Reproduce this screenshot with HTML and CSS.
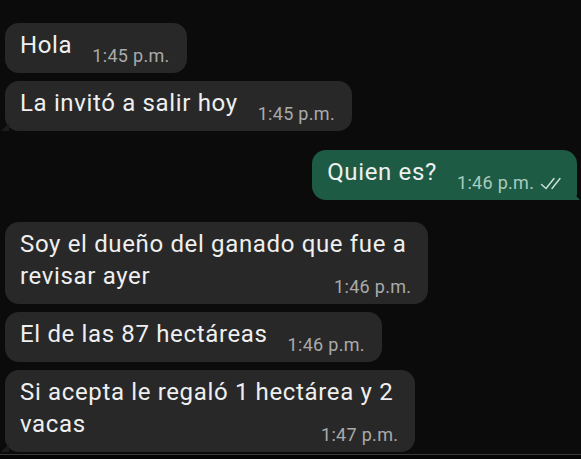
FILE: index.html
```html
<!DOCTYPE html>
<html lang="es">
<head>
  <meta charset="UTF-8" />
  <title>Chat</title>
  <meta name="viewport" content="width=device-width, initial-scale=1.0" />
  <link rel="stylesheet" href="styles.css">
</head>
<body>
  <div class="chat">
    <div class="msg in">
      <span class="text">Hola</span><span class="time">1:45 p.m.</span>
    </div>
    <div class="msg in tail">
      <span class="text">La invitó a salir hoy</span><span class="time">1:45 p.m.</span>
    </div>

    <div class="msg out tail">
      <span class="text">Quien es?</span><span class="time">1:46 p.m.
        <svg class="ticks" viewBox="0 0 26 14" width="26" height="14">
          <path d="M1.5 7.5 L6 11.5 L14 1.5" />
          <path d="M12 11.5 L20 1.5" />
        </svg>
      </span>
    </div>

    <div class="msg in">
      <span class="text">Soy el dueño del ganado que fue a<br>revisar ayer</span><span class="time">1:46 p.m.</span>
    </div>
    <div class="msg in">
      <span class="text">El de las 87 hectáreas</span><span class="time">1:46 p.m.</span>
    </div>
    <div class="msg in tail">
      <span class="text">Si acepta le regaló 1 hectárea y 2<br>vacas</span><span class="time">1:47 p.m.</span>
    </div>
  </div>
  <div class="bottom-bar"></div>
</body>
</html>
```

FILE: styles.css
```css
body {
  margin: 0;
  background-color: #0b0b0b;
  font-family: Roboto, "Liberation Sans", sans-serif;
  height: 100vh;
  overflow: hidden;
}

.chat {
  display: flex;
  flex-direction: column;
  align-items: flex-start;
  padding: 23px 4px 0 5px;
  height: 432px;
  box-sizing: border-box;
}

.msg {
  position: relative;
  display: flow-root;
  padding: 6px 22px 9px 15px;
  margin-bottom: 8px;
  border-radius: 14px;
  background-color: #282828;
  color: #efefef;
  font-size: 24px;
  line-height: 32px;
  letter-spacing: 0.65px;
}

.time {
  float: right;
  margin: 19px -5px 0 20px;
  font-size: 18px;
  line-height: 16px;
  letter-spacing: 0.3px;
  color: #aaaaaa;
}

.msg.out {
  align-self: flex-end;
  margin-top: 11px;
  margin-bottom: 22px;
  padding-left: 15px;
  padding-right: 16px;
  background-color: #1e5b45;
  border-bottom-right-radius: 6px;
}

.msg.out .time {
  color: #a9cbbd;
}

.ticks {
  fill: none;
  stroke: #cfe3da;
  stroke-width: 1.4;
  stroke-linecap: round;
  stroke-linejoin: round;
  vertical-align: -2px;
  margin-left: 1px;
}

.msg.in.tail::before {
  content: "";
  position: absolute;
  left: -4px;
  bottom: 0;
  width: 8px;
  height: 8px;
  background-color: #1c1c1c;
  clip-path: polygon(0 100%, 100% 0, 100% 100%);
}

.msg.out.tail::after {
  content: "";
  position: absolute;
  right: -3px;
  bottom: 0;
  width: 8px;
  height: 8px;
  background-color: #1e5b45;
  clip-path: polygon(0 0, 100% 100%, 0 100%);
}

.bottom-bar {
  border-top: 1px solid #3a3a3a;
  margin-top: 22px;
  height: 10px;
  background-color: #050505;
}
```
